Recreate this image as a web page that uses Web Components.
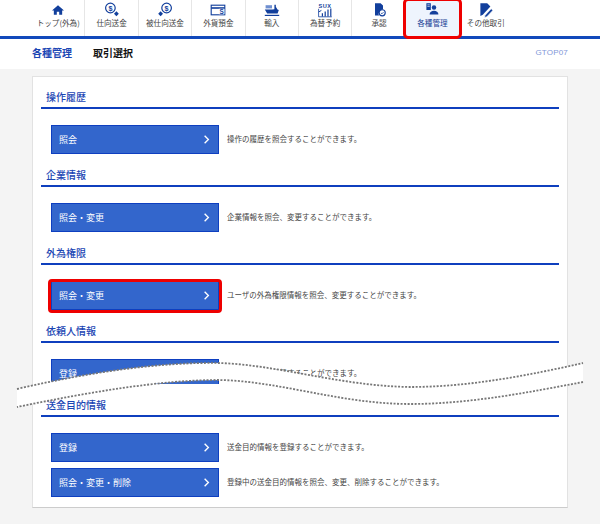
<!DOCTYPE html>
<html lang="ja">
<head>
<meta charset="utf-8">
<title>各種管理</title>
<style>
html, body { margin: 0; background: #f4f4f4; }
body { font-family: "Noto Sans CJK JP", "Noto Sans", sans-serif; }
</style>
</head>
<body>
<bank-page>
  <bank-nav>
    <nav-tab label="トップ(外為)" icon="home"></nav-tab>
    <nav-tab label="仕向送金" icon="out"></nav-tab>
    <nav-tab label="被仕向送金" icon="in"></nav-tab>
    <nav-tab label="外貨預金" icon="card"></nav-tab>
    <nav-tab label="輸入" icon="ship"></nav-tab>
    <nav-tab label="為替予約" icon="chart"></nav-tab>
    <nav-tab label="承認" icon="approve" plain></nav-tab>
    <nav-tab label="各種管理" icon="admin" plain active></nav-tab>
    <nav-tab label="その他取引" icon="other" plain></nav-tab>
  </bank-nav>
  <page-head crumb="各種管理" title="取引選択" code="GTOP07"></page-head>
  <main-card>
    <menu-section title="操作履歴">
      <menu-row label="照会">操作の履歴を照会することができます。</menu-row>
    </menu-section>
    <menu-section title="企業情報">
      <menu-row label="照会・変更">企業情報を照会、変更することができます。</menu-row>
    </menu-section>
    <menu-section title="外為権限">
      <menu-row label="照会・変更" marked>ユーザの外為権限情報を照会、変更することができます。</menu-row>
    </menu-section>
    <menu-section title="依頼人情報" folded>
      <menu-row label="登録">依頼人情報を登録することができます。</menu-row>
    </menu-section>
    <menu-section title="送金目的情報" last>
      <menu-row label="登録">送金目的情報を登録することができます。</menu-row>
      <menu-row label="照会・変更・削除">登録中の送金目的情報を照会、変更、削除することができます。</menu-row>
    </menu-section>
  </main-card>
  <fold-mark></fold-mark>
</bank-page>

<script>
// nav icons, all on a 20x20 box
const ICONS = {
  home: `<path d="M10 4 2.500 10.500h2.300v5.500h3.700v-3.700h3v3.700h3.700v-5.500h2.300z" fill="#123f9c"/>`,
  out: `<circle cx="8" cy="7.500" r="6" fill="none" stroke="#123f9c" stroke-width="1.500"/>
    <text x="8" y="10.800" text-anchor="middle" font-size="9" font-weight="700" fill="#123f9c">$</text>
    <path d="M15.500 11.500l3 3.200-3 3.200-3-3.200z" fill="#123f9c"/>`,
  in: `<circle cx="12" cy="7.500" r="6" fill="none" stroke="#123f9c" stroke-width="1.500"/>
    <text x="12" y="10.800" text-anchor="middle" font-size="9" font-weight="700" fill="#123f9c">$</text>
    <path d="M4.500 11.500l3 3.200-3 3.200-3-3.200z" fill="#123f9c"/>`,
  card: `<rect x="1.500" y="4" width="17" height="12" fill="none" stroke="#123f9c" stroke-width="1.400"/>
    <rect x="1.500" y="6.500" width="17" height="2" fill="#123f9c"/>
    <rect x="11" y="8.500" width="7" height="6.800" fill="#fff"/>
    <text x="14.500" y="15.300" text-anchor="middle" font-size="8" font-weight="700" fill="#123f9c">S</text>`,
  ship: `<rect x="2" y="4" width="8" height="4" fill="#6f8fd0"/>
    <path d="M13 9V3.500h1.800V6l2 3.500 1.700.5-1.500 4.500H4L1 9.500h9.500z" fill="#123f9c"/>
    <path d="M1 16h18v1.500H1z" fill="#123f9c"/>`,
  chart: `<text x="10" y="7.500" text-anchor="middle" font-size="7" font-weight="700" letter-spacing=".6" fill="#123f9c">SUX</text>
    <path d="M6 18v-4h1.500v4zM9.500 18v-6H11v6zM13 18V9.500h1.500V18zM16.500 18V8H18v10z" fill="#123f9c"/>
    <path d="M2 12.500l3.500-2" stroke="#123f9c" stroke-width="1.200"/>
    <path d="M2 8.500V18.500h16.500" fill="none" stroke="#123f9c" stroke-width="1"/>`,
  approve: `<path d="M5 1.500h7l3 3V9a6 6 0 0 0-5 8H5z" fill="#123f9c"/>
    <circle cx="14" cy="13.500" r="3.800" fill="none" stroke="#123f9c" stroke-width="1.400"/>
    <path d="M12.400 13.500l1.300 1.300 2-2.200" fill="none" stroke="#123f9c" stroke-width="1"/>`,
  admin: `<path d="M3 1.500h5.500V10H3z" fill="#123f9c"/>
    <path d="M4.200 3.500h3M4.200 5.500h3" stroke="#fff" stroke-width=".8"/>
    <circle cx="12.500" cy="7" r="2.800" fill="#123f9c"/>
    <path d="M7 15.500c0-3 2.500-4.500 5.500-4.500s5.500 1.500 5.500 4.500z" fill="#123f9c"/>`,
  other: `<path d="M3 1.500h8.500l4 4-9.500 10.500L3 17.500z" fill="#123f9c"/>
    <path d="M9 16.500l7.500-8 2 2-7.500 8-2.800.8z" fill="#123f9c" stroke="#fff" stroke-width=".7"/>`
};

class BankPage extends HTMLElement {
  connectedCallback() {
    this.attachShadow({ mode: "open" }).innerHTML = `
      <style>
        :host { display: flex; flex-direction: column; position: relative; width: 600px; height: 524px; overflow: hidden; background: #f4f4f4; }
      </style>
      <slot></slot>`;
  }
}

class BankNav extends HTMLElement {
  connectedCallback() {
    this.attachShadow({ mode: "open" }).innerHTML = `
      <style>
        :host { display: grid; grid-template-columns: repeat(9, 53.4px); height: 36px; padding-left: 32px; background: #fff; border-bottom: 3px solid #1149bb; }
      </style>
      <slot></slot>`;
  }
}

class NavTab extends HTMLElement {
  connectedCallback() {
    const active = this.hasAttribute("active");
    const plain = this.hasAttribute("plain");
    this.attachShadow({ mode: "open" }).innerHTML = `
      <style>
        :host { display: flex; flex-direction: column; align-items: center; position: relative; height: 36px; box-sizing: border-box;
          ${plain ? "" : "border-right: 1px solid #e6e6e6;"}
          ${active ? "background: #eef4fd;" : ""} }
        svg { width: 16px; height: 16px; margin-top: 2px; font-family: "Liberation Sans", sans-serif; }
        span { font-size: 7.6px; line-height: 10px; margin-top: 0; white-space: nowrap; color: ${active ? "#1b3f95" : "#444"}; }
        i { position: absolute; left: -3px; right: -3px; top: -2px; bottom: -3px; border: 3px solid #ee0000; border-radius: 5px; }
      </style>
      <svg viewBox="0 0 20 20">${ICONS[this.getAttribute("icon")]}</svg>
      <span>${this.getAttribute("label")}</span>
      ${active ? "<i></i>" : ""}`;
  }
}

class PageHead extends HTMLElement {
  connectedCallback() {
    this.attachShadow({ mode: "open" }).innerHTML = `
      <style>
        :host { display: flex; align-items: center; box-sizing: border-box; height: 30px; padding: 0 32px 3px; background: #fff; }
        b { font-size: 10px; font-weight: 700; }
        .crumb { color: #1b46b4; width: 61px; }
        .title { color: #111; }
        .code { margin-left: auto; font-size: 8px; font-family: "Liberation Sans", sans-serif; letter-spacing: .2px; color: #7f97d8; }
      </style>
      <b class="crumb">${this.getAttribute("crumb")}</b>
      <b class="title">${this.getAttribute("title")}</b>
      <span class="code">${this.getAttribute("code")}</span>`;
  }
}

class MainCard extends HTMLElement {
  connectedCallback() {
    this.attachShadow({ mode: "open" }).innerHTML = `
      <style>
        :host { display: flex; flex-direction: column; box-sizing: border-box; width: 536px; height: 432px; margin: 7px 0 0 32px; padding: 10px 8px 0; background: #fff; border: 1px solid #e2e2e2; border-bottom-color: #ccc; }
      </style>
      <slot></slot>`;
  }
}

class MenuSection extends HTMLElement {
  connectedCallback() {
    const folded = this.hasAttribute("folded");
    this.attachShadow({ mode: "open" }).innerHTML = `
      <style>
        :host { display: block; height: ${folded ? 74 : 78}px; }
        h2 { margin: 0; height: 20px; padding-left: 5px; font-size: 10px; line-height: 20px; font-weight: 500; color: #1b46b4; border-bottom: 2px solid #0f3fbe; }
        .rows { display: flex; flex-direction: column; gap: 6px; margin-top: 16px; padding-left: 10px; ${folded ? "height: 25px; overflow: hidden;" : ""} }
      </style>
      <h2>${this.getAttribute("title")}</h2>
      <div class="rows"><slot></slot></div>`;
  }
}

class MenuRow extends HTMLElement {
  connectedCallback() {
    const marked = this.hasAttribute("marked");
    this.attachShadow({ mode: "open" }).innerHTML = `
      <style>
        :host { display: flex; align-items: center; gap: 8px; height: 29px; }
        .btn { display: flex; align-items: center; justify-content: space-between; position: relative; box-sizing: border-box; width: 168px; height: 29px; padding: 0 8px 0 7px; background: #3366cc; border: 1px solid #0e3fc0; color: #fff; font-size: 9px; }
        .btn span { padding-bottom: 1px; }
        .btn svg { width: 7px; height: 9px; }
        .btn i { position: absolute; left: -4px; right: -4px; top: -3px; bottom: -4px; border: 3px solid #ee0000; border-radius: 4px; }
        p { margin: 0; padding-bottom: 3px; font-size: 7.500px; color: #444; white-space: nowrap; }
      </style>
      <div class="btn">
        <span>${this.getAttribute("label")}</span>
        <svg viewBox="0 0 8 12"><path d="M1.500 1 6.500 6l-5 5" fill="none" stroke="#fff" stroke-width="1.800"/></svg>
        ${marked ? "<i></i>" : ""}
      </div>
      <p><slot></slot></p>`;
  }
}

// the torn "page continues" band lying over the fourth section
class FoldMark extends HTMLElement {
  connectedCallback() {
    const top = "17 389 C 90 372, 160 362, 219 363 C 280 365, 340 386, 410 387 C 470 387, 530 375, 583 363";
    const bottom = "583 382 C 530 392, 470 404, 410 404 C 340 404, 280 381, 219 380 C 160 380, 90 392, 17 407";
    this.attachShadow({ mode: "open" }).innerHTML = `
      <style>
        :host { display: block; position: absolute; left: 0; top: 0; width: 600px; height: 524px; pointer-events: none; }
        svg { display: block; }
        .dots { fill: none; stroke: #777; stroke-width: 1.800; stroke-dasharray: 2 1.500; }
      </style>
      <svg width="600" height="524" viewBox="0 0 600 524">
        <path d="M${top} L${bottom} Z" fill="#fff"/>
        <path class="dots" d="M${top}"/>
        <path class="dots" d="M${bottom}"/>
      </svg>`;
  }
}

customElements.define("bank-page", BankPage);
customElements.define("bank-nav", BankNav);
customElements.define("nav-tab", NavTab);
customElements.define("page-head", PageHead);
customElements.define("main-card", MainCard);
customElements.define("menu-section", MenuSection);
customElements.define("menu-row", MenuRow);
customElements.define("fold-mark", FoldMark);
</script>
</body>
</html>
